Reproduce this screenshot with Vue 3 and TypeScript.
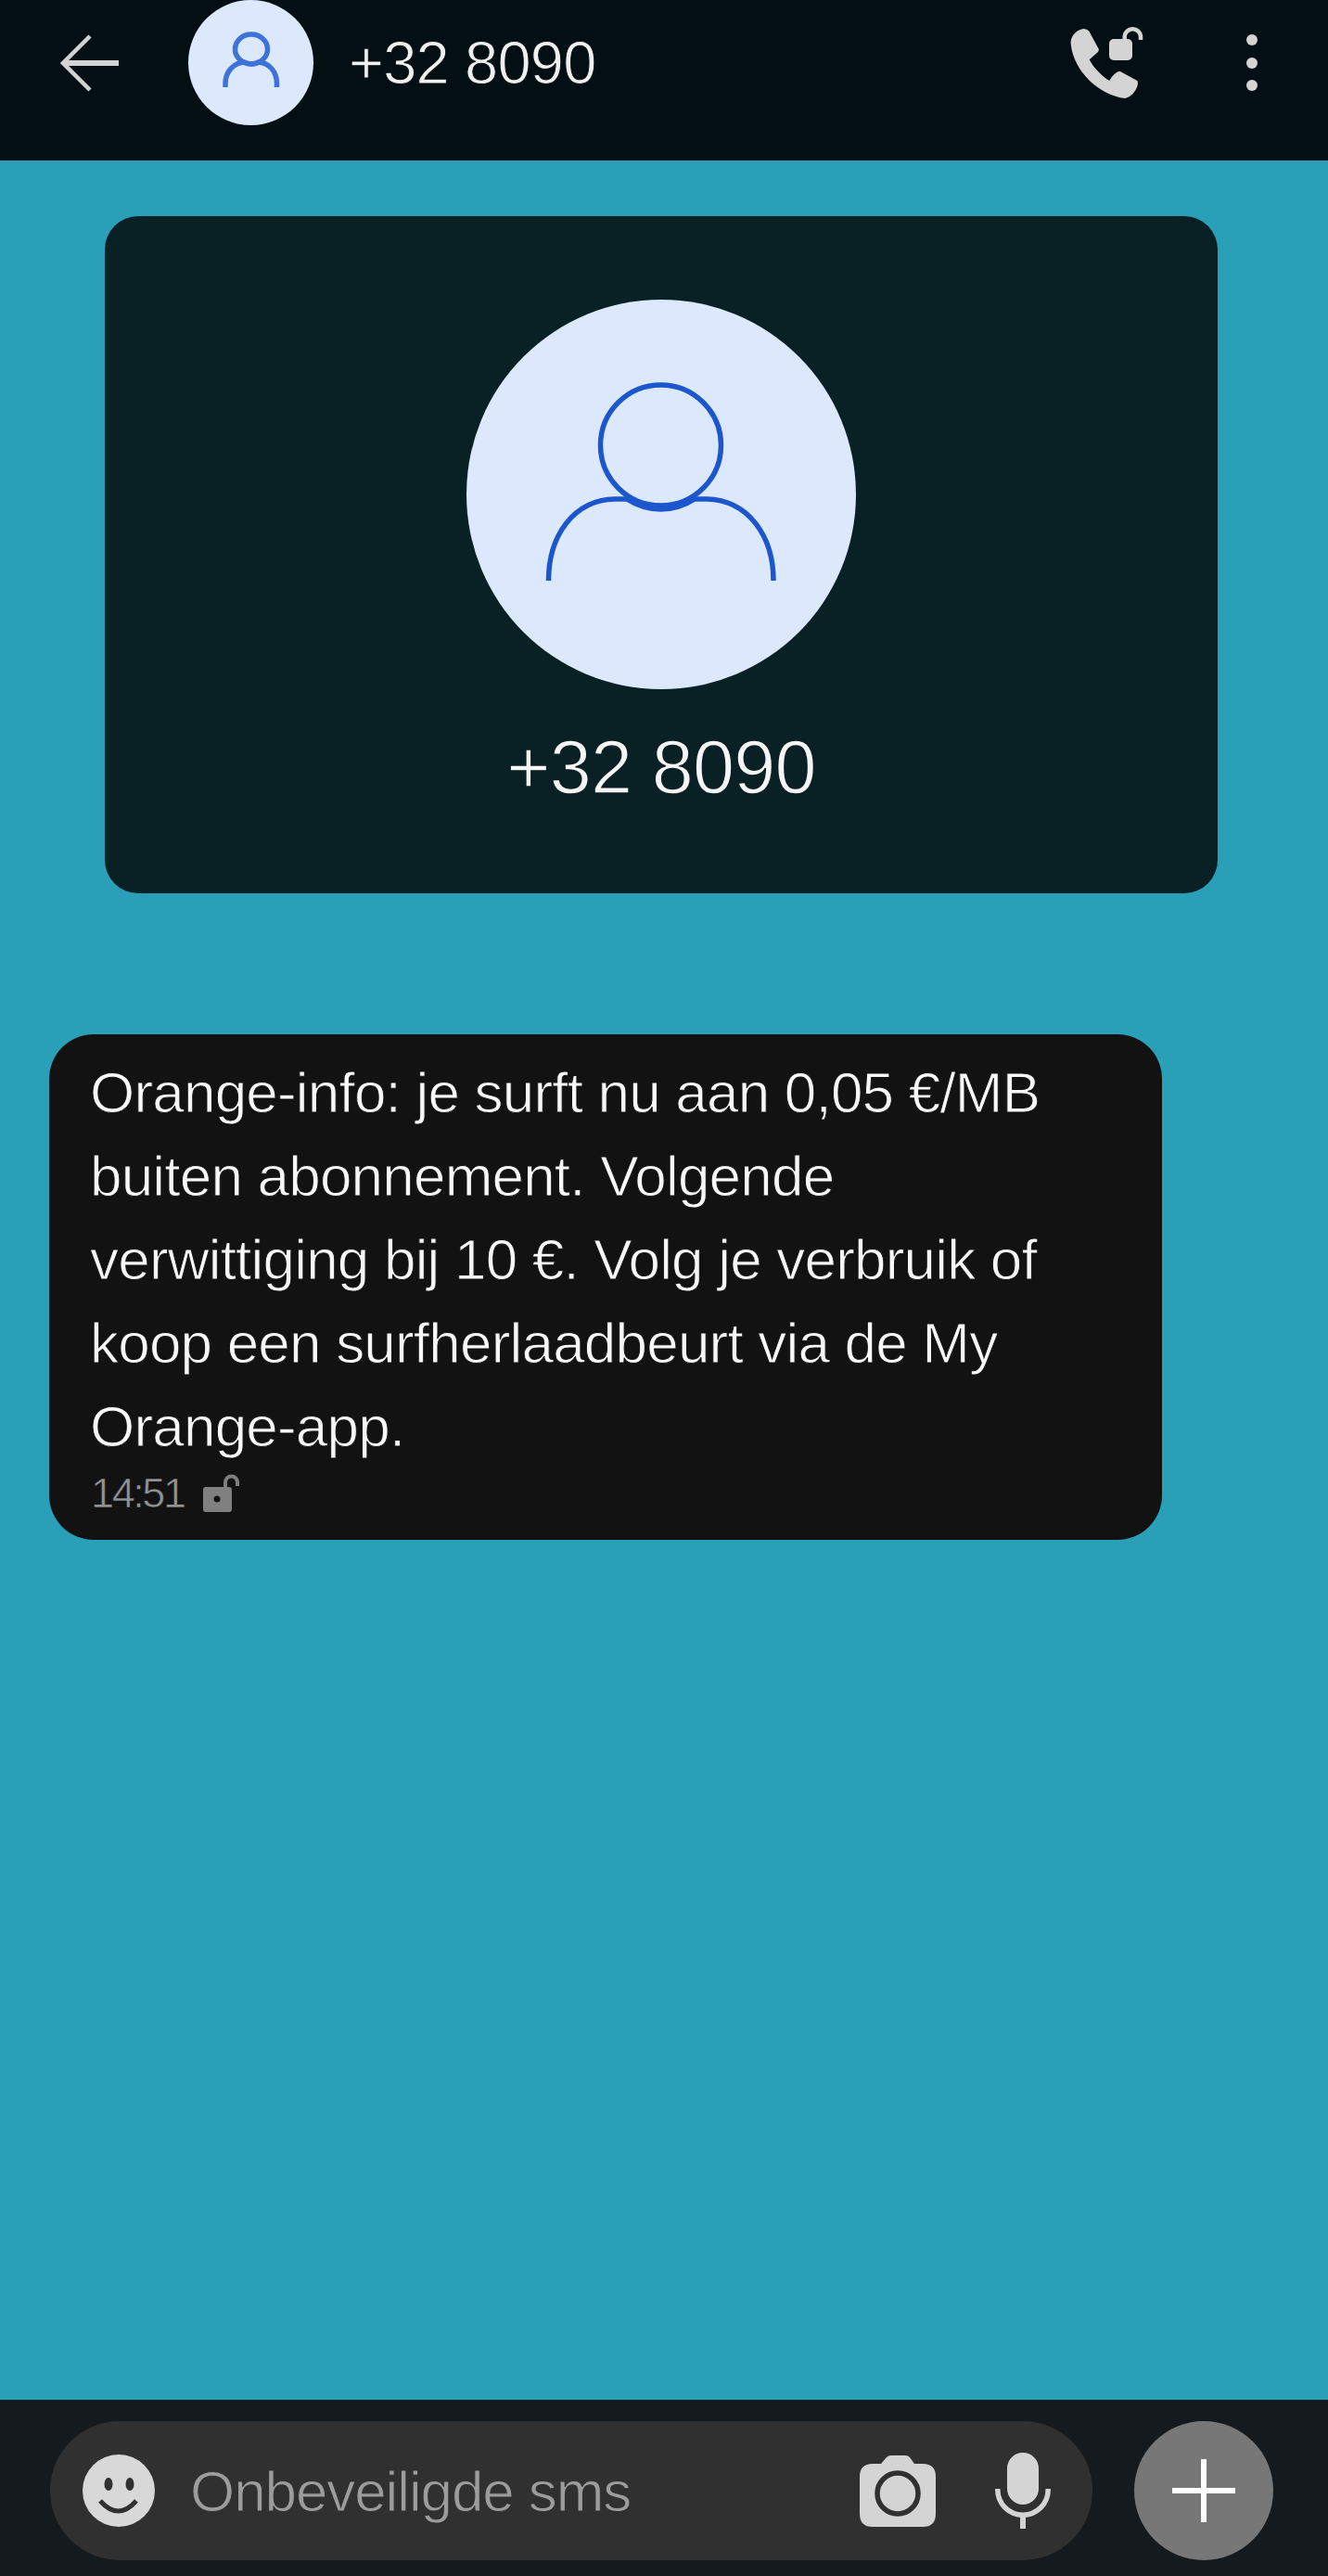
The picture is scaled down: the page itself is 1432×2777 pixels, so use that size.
<script setup lang="ts">
const lines: string[] = [
  'Orange-info: je surft nu aan 0,05 €/MB',
  'buiten abonnement. Volgende',
  'verwittiging bij 10 €. Volg je verbruik of',
  'koop een surfherlaadbeurt via de My',
  'Orange-app.',
]
</script>

<template>
  <div class="screen">
    <header class="topbar">
      <div class="toprow">
        <svg class="back" width="63" height="62" viewBox="0 0 63 62" fill="none" stroke="#d2d2d2">
          <path d="M32 2 L3 31 L32 60" stroke-width="4.500" />
          <path d="M4 31 H63" stroke-width="6" />
        </svg>
        <div class="mini-avatar">
          <svg width="135" height="135" viewBox="0 0 135 135" fill="none" stroke="#3d72d9" stroke-width="5.500">
            <ellipse cx="68" cy="53" rx="17.500" ry="16" />
            <path d="M40 94 V90 C40 78 48 68 60 67 Q68 71 76 67 C88 68 95.500 78 95.500 90 V94" />
          </svg>
        </div>
        <div class="top-name">+32 8090</div>
        <svg class="call" width="80" height="78" viewBox="0 0 80 78" fill="#d4d4d4">
          <path d="M0.700 19.700 C4 49.700 32 74.700 59 78 C69 76.300 75 63 72.300 59 L54 49 C49 48.300 44 56 42.300 59 C35 55 25 45 20.700 36.300 L30 28 C31 26 31 25.500 30.700 24.700 L20.700 6.300 C19 3 14 3 14 3 C5 5 0 12 0.700 19.700 Z" />
          <rect x="42" y="14" width="25" height="23" rx="5" />
          <path d="M58.700 15 V11 A8.700 8.700 0 0 1 76 11 V15" fill="none" stroke="#d4d4d4" stroke-width="4.500" />
        </svg>
        <div class="dots"><i></i><i></i><i></i></div>
      </div>
    </header>

    <main class="thread">
      <section class="card">
        <div class="big-avatar">
          <svg width="420" height="420" viewBox="0 0 420 420" fill="none" stroke="#1c56cc" stroke-width="5.500">
            <circle cx="209.500" cy="157" r="65" />
            <path d="M88.500 303 C88.500 255 115 216 160 215 H173 Q190 226 209.500 226 Q229 226 246 215 H259 C304 216 331 255 331 303" />
          </svg>
        </div>
        <div class="big-name">+32 8090</div>
      </section>

      <article class="bubble">
        <p v-for="line in lines" :key="line" class="line">{{ line }}</p>
        <div class="meta">
          <span class="time">14:51</span>
          <svg width="40" height="42" viewBox="0 0 40 42">
            <rect x="0" y="14" width="31" height="27" rx="3" fill="#808080" />
            <circle cx="15" cy="27" r="3.500" fill="#121212" />
            <path d="M24 15 V9 A6.500 6.500 0 0 1 37 9 V13" fill="none" stroke="#808080" stroke-width="4" />
          </svg>
        </div>
      </article>
    </main>

    <footer class="composer">
      <div class="field">
        <svg width="78" height="78" viewBox="0 0 78 78">
          <circle cx="39" cy="39" r="39" fill="#d8d8d8" />
          <ellipse cx="28" cy="32" rx="4.500" ry="7" fill="#303030" />
          <ellipse cx="51" cy="32" rx="4.500" ry="7" fill="#303030" />
          <path d="M19 50 Q38.500 72 58 50" fill="none" stroke="#303030" stroke-width="5" />
        </svg>
        <span class="placeholder">Onbeveiligde sms</span>
        <svg width="82" height="77" viewBox="0 0 82 77">
          <path d="M14 9 H23 L29 2 Q31 0 34 0 H49 Q52 0 54 2 L59 9 H68 Q82 9 82 23 V63 Q82 77 68 77 H14 Q0 77 0 63 V23 Q0 9 14 9 Z" fill="#d4d4d4" />
          <circle cx="41" cy="41" r="22" fill="none" stroke="#303030" stroke-width="5.500" />
        </svg>
        <svg class="mic" width="60" height="82" viewBox="0 0 60 82" fill="#d4d4d4">
          <rect x="13" y="0" width="34" height="56" rx="17" />
          <path d="M2.800 39 V40 A27.200 27.200 0 0 0 57.200 40 V39" fill="none" stroke="#d4d4d4" stroke-width="5.500" />
          <rect x="27" y="68" width="6" height="14" />
        </svg>
      </div>
      <div class="add">
        <svg width="68" height="68" viewBox="0 0 68 68" fill="#ffffff">
          <rect x="31" y="0" width="6" height="68" />
          <rect x="0" y="31" width="68" height="6" />
        </svg>
      </div>
    </footer>
  </div>
</template>

<style scoped>
.screen {
  width: 1432px;
  height: 2777px;
  display: flex;
  flex-direction: column;
  overflow: hidden;
  background: #2a9fb8;
  font-family: "Liberation Sans", Arial, sans-serif;
}
.topbar {
  height: 173px;
  flex: none;
  background: #040f13;
}
.toprow {
  height: 135px;
  display: flex;
  align-items: center;
  padding: 0 76px 0 65px;
}
.back { flex: none; }
.mini-avatar {
  width: 135px;
  height: 135px;
  flex: none;
  margin-left: 75px;
  border-radius: 50%;
  background: #dce8fc;
}
.mini-avatar svg, .big-avatar svg { display: block; }
.top-name {
  flex: 1;
  margin-left: 38px;
  font-size: 65px;
  letter-spacing: -0.800px;
  color: #f0f0f0;
  -webkit-text-stroke: 1px #040f13;
}
.call { flex: none; margin-bottom: 2px; }
.dots {
  width: 12px;
  flex: none;
  margin-left: 110px;
  display: flex;
  flex-direction: column;
  gap: 12.500px;
}
.dots i {
  display: block;
  width: 12px;
  height: 12px;
  border-radius: 50%;
  background: #d4d4d4;
}
.thread {
  flex: 1;
  padding-top: 60px;
}
.card {
  width: 1200px;
  height: 730px;
  margin-left: 113px;
  padding-top: 90px;
  box-sizing: border-box;
  display: flex;
  flex-direction: column;
  align-items: center;
  border-radius: 36px;
  background: #092025;
}
.big-avatar {
  width: 420px;
  height: 420px;
  border-radius: 50%;
  background: #dce8fc;
}
.big-name {
  margin-top: 39px;
  font-size: 81px;
  line-height: 90px;
  letter-spacing: -0.800px;
  color: #f5f5f5;
  -webkit-text-stroke: 1.400px #092025;
}
.bubble {
  width: 1200px;
  height: 545px;
  margin: 152px 0 0 53px;
  padding: 18px 0 0 44px;
  box-sizing: border-box;
  border-radius: 48px;
  background: #121212;
}
.line {
  margin: 0;
  font-size: 62px;
  line-height: 90px;
  letter-spacing: -0.800px;
  color: #f7f7f7;
  white-space: nowrap;
  -webkit-text-stroke: 1px #121212;
}
.meta {
  display: flex;
  align-items: center;
  gap: 20px;
  height: 42px;
  margin-top: 6px;
  padding-left: 1px;
}
.time {
  font-size: 45px;
  letter-spacing: -2.400px;
  color: #929292;
  -webkit-text-stroke: 0.700px #121212;
}
.composer {
  height: 190px;
  flex: none;
  box-sizing: border-box;
  padding: 23px 0 0 54px;
  display: flex;
  align-items: flex-start;
  gap: 45px;
  background: #141a1d;
}
.field {
  width: 1124px;
  height: 150px;
  box-sizing: border-box;
  padding: 0 45px 0 35px;
  display: flex;
  align-items: center;
  border-radius: 75px;
  background: #303030;
}
.placeholder {
  flex: 1;
  margin-left: 38px;
  font-size: 62px;
  letter-spacing: -1.100px;
  color: #9c9c9c;
  -webkit-text-stroke: 1px #303030;
}
.mic { margin-left: 64px; }
.add {
  width: 150px;
  height: 150px;
  display: flex;
  align-items: center;
  justify-content: center;
  border-radius: 50%;
  background: #777777;
}
</style>
